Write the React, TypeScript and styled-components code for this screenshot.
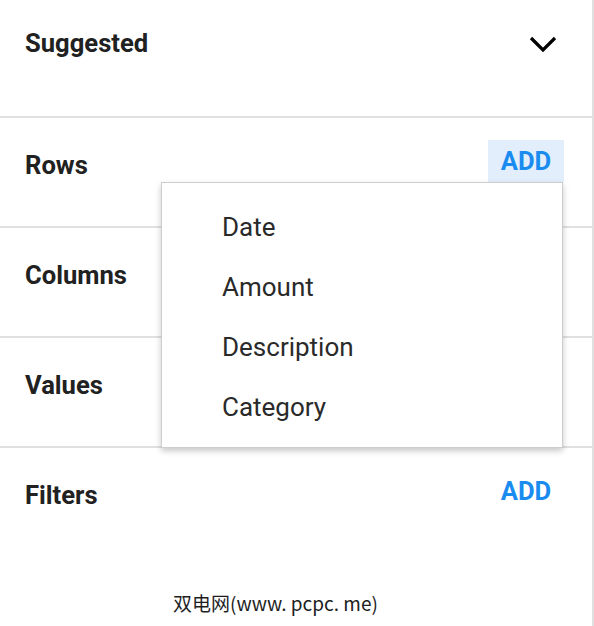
import React from 'react'
import styled, { createGlobalStyle } from 'styled-components'

const GlobalStyle = createGlobalStyle`
  html, body {
    margin: 0;
    padding: 0;
    background: #ffffff;
  }
  body {
    font-family: Roboto, 'Noto Sans', Arial, sans-serif;
    -webkit-font-smoothing: antialiased;
  }
`

const Panel = styled.div`
  position: relative;
  width: 594px;
  min-height: 626px;
  box-sizing: border-box;
  border-right: 2px solid #e0e0e0;
  background: #ffffff;
`

const Section = styled.div<{ top: number; height: number; divider?: boolean }>`
  position: relative;
  box-sizing: border-box;
  height: ${({ height }) => height}px;
  padding: ${({ top }) => top}px 28px 0 25px;
  border-bottom: ${({ divider }) => (divider ? '2px solid #e0e0e0' : 'none')};
`

const Header = styled.div`
  display: flex;
  align-items: center;
  justify-content: space-between;
  height: 42px;
`

const Title = styled.div<{ offset?: number }>`
  padding-top: ${({ offset }) => offset ?? 0}px;
  font-size: 25.6px;
  font-weight: 700;
  color: #212121;
`

const AddButton = styled.button<{ active?: boolean }>`
  display: flex;
  align-items: center;
  justify-content: center;
  width: 76px;
  height: 42px;
  padding: 0;
  border: none;
  border-radius: 0;
  background: ${({ active }) => (active ? '#e3eefc' : 'transparent')};
  color: #1a8cf0;
  font-family: Roboto, Arial, sans-serif;
  font-size: 25.6px;
  font-weight: 700;
  cursor: pointer;
`

const Chevron = styled.svg`
  width: 30px;
  height: 20px;
  margin-right: 6px;
  margin-top: 4px;
`

const Menu = styled.ul`
  position: absolute;
  z-index: 2;
  left: 161px;
  top: 64px;
  width: 402px;
  margin: 0;
  padding: 14px 0 10px;
  list-style: none;
  box-sizing: border-box;
  background: #ffffff;
  border: 1px solid #cdcdcd;
  box-shadow: 0 3px 6px rgba(0, 0, 0, 0.22);
`

const MenuItem = styled.li`
  height: 60px;
  display: flex;
  align-items: center;
  padding-left: 60px;
  font-size: 26px;
  color: #2a2a2a;
  cursor: pointer;
`

const Watermark = styled.div`
  position: absolute;
  left: 173px;
  top: 589px;
  font-family: 'Noto Sans CJK SC', sans-serif;
  font-size: 19px;
  color: #1e1e1e;
  white-space: pre;
`

const menuFields = ['Date', 'Amount', 'Description', 'Category']

export default function App() {
  return (
    <>
      <GlobalStyle />
      <Panel>
        <Section top={22} height={118} divider>
          <Header>
            <Title>Suggested</Title>
            <Chevron viewBox="0 0 30 20" fill="none">
              <polyline points="3,3 15,15 27,3" stroke="#000" strokeWidth="3.2" />
            </Chevron>
          </Header>
        </Section>
        <Section top={22} height={110} divider>
          <Header>
            <Title offset={8}>Rows</Title>
            <AddButton active>ADD</AddButton>
          </Header>
          <Menu>
            {menuFields.map(field => (
              <MenuItem key={field}>{field}</MenuItem>
            ))}
          </Menu>
        </Section>
        <Section top={22} height={110} divider>
          <Header>
            <Title offset={8}>Columns</Title>
            <AddButton>ADD</AddButton>
          </Header>
        </Section>
        <Section top={22} height={110} divider>
          <Header>
            <Title offset={8}>Values</Title>
            <AddButton>ADD</AddButton>
          </Header>
        </Section>
        <Section top={22} height={110}>
          <Header>
            <Title offset={8}>Filters</Title>
            <AddButton>ADD</AddButton>
          </Header>
        </Section>
        <Watermark>双电网(www. pcpc. me)</Watermark>
      </Panel>
    </>
  )
}
